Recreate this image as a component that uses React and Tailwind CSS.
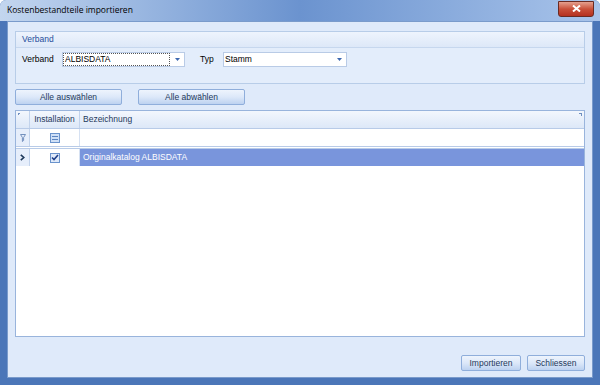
import React from "react";

const Combo = ({ value, width, focused }) => (
  <div className={`flex items-center h-[15px] bg-white border border-[#b9cbe6] ${width}`}>
    <div className={`flex-1 h-full flex items-center px-[1px] ${focused ? "border border-dotted border-[#555]" : ""}`}>
      <span className="leading-none">{value}</span>
    </div>
    <div className="w-[14px] h-full flex items-center justify-center">
      <svg width="5" height="3" viewBox="0 0 5 3">
        <path d="M0 0h5L2.5 3z" fill="#3d68b0" />
      </svg>
    </div>
  </div>
);

const Btn = ({ children, width }) => (
  <button className={`h-[16px] ${width} rounded-[2px] border border-[#8faedb] bg-gradient-to-b from-[#eef4fd] via-[#dce8f9] to-[#bdd2f0] text-[8.5px] leading-none text-[#1e395b]`}>
    {children}
  </button>
);

const App = () => {
  return (
    <div
      className="w-[600px] h-[385px] flex flex-col bg-[#4b76b8] rounded-t-[6px] overflow-hidden text-[8.5px] text-black"
      style={{ fontFamily: "'Liberation Sans', Arial, sans-serif" }}
    >
      {/* title bar */}
      <div className="h-[21px] flex items-center bg-gradient-to-r from-[#c3d6ef] via-[#6b93cf] to-[#a9c4ea]">
        <span
          className="ml-[7px] text-[8.5px] text-black"
          style={{ fontFamily: "'Open Sans', 'Liberation Sans', sans-serif" }}
        >
          Kostenbestandteile importieren
        </span>
        <div className="ml-auto mr-[6px] mt-[-4px] w-[36px] h-[16px] rounded-b-[3px] border border-[#6b2a22] bg-gradient-to-b from-[#e4a08f] via-[#c9503a] to-[#b5301f] flex items-center justify-center">
          <svg width="9" height="7" viewBox="0 0 9 7">
            <path d="M1 0.5l7 6M8 0.5l-7 6" stroke="#fff" strokeWidth="2" />
          </svg>
        </div>
      </div>

      {/* client area */}
      <div className="flex-1 mx-[7px] mb-[7px] border border-[#7a9bcb] bg-[#dfeafa] flex flex-col px-[7px] pt-[9px] pb-[6px]">
        {/* group box */}
        <div className="h-[53px] border border-[#b8cde8] bg-[#e3edfb] flex flex-col">
          <div className="h-[16px] bg-gradient-to-b from-[#eef4fd] to-[#dde8f8] border-b border-[#c6d7ee] flex items-center pl-[6px] text-[#1f4d9a]">
            Verband
          </div>
          <div className="flex items-center mt-[4px] pl-[6px]">
            <span className="w-[40px]">Verband</span>
            <Combo value="ALBISDATA" width="w-[123px]" focused />
            <span className="ml-[15px] w-[23px]">Typ</span>
            <Combo value="Stamm" width="w-[124px]" />
          </div>
        </div>

        {/* buttons */}
        <div className="flex gap-[16px] mt-[5px]">
          <Btn width="w-[107px]">Alle auswählen</Btn>
          <Btn width="w-[107px]">Alle abwählen</Btn>
        </div>

        {/* grid */}
        <div className="mt-[5px] h-[227px] border border-[#99b4dc] bg-white flex flex-col">
          <div className="h-[18px] flex bg-gradient-to-b from-[#f3f7fd] to-[#dde8f8] border-b border-[#b8cbe8]">
            <div className="w-[14px] border-r border-[#c2d3ec] relative">
              <div className="absolute left-[2px] top-[2px] w-[2px] h-[2px] border-l border-t border-[#6f8fbf]" />
            </div>
            <div className="w-[50px] border-r border-[#c2d3ec] flex items-center justify-center text-[#1e395b]">Installation</div>
            <div className="flex-1 flex items-center pl-[3px] text-[#1e395b] relative">
              Bezeichnung
              <div className="absolute right-[2px] top-[2px] w-[3px] h-[3px] border-r border-t border-[#6f8fbf]" />
            </div>
          </div>
          <div className="h-[18px] flex border-b border-[#b8cbe8]">
            <div className="w-[14px] border-r border-[#c2d3ec] bg-[#e6eefb] flex items-center justify-center">
              <svg width="6" height="8" viewBox="0 0 6 8">
                <path d="M0.5 0.5h5L3.6 3.5v3l-1.2 1v-4z" fill="none" stroke="#7390bd" strokeWidth="1" />
              </svg>
            </div>
            <div className="w-[50px] border-r border-[#d6e1f2] flex items-center justify-center">
              <div className="w-[10px] h-[10px] border border-[#6a93cc] bg-[#cfe0f7] flex items-center justify-center">
                <div className="w-[6px] h-[4px] border-t border-b border-[#5b84c0]" />
              </div>
            </div>
            <div className="flex-1" />
          </div>
          <div className="h-[18px] flex border-t border-[#b8cbe8] mt-[1px]">
            <div className="w-[14px] border-r border-[#c2d3ec] bg-[#e6eefb] flex items-center justify-center">
              <svg width="5" height="7" viewBox="0 0 5 7">
                <path d="M0.8 0.8l3 2.7-3 2.7" fill="none" stroke="#1e395b" strokeWidth="1.6" />
              </svg>
            </div>
            <div className="w-[50px] border-r border-[#d6e1f2] flex items-center justify-center">
              <div className="w-[10px] h-[10px] border border-[#6a93cc] bg-[#dfeafa] flex items-center justify-center">
                <svg width="8" height="7" viewBox="0 0 8 7">
                  <path d="M1 3.5l2 2 4-4.5" fill="none" stroke="#1e3f8a" strokeWidth="1.6" />
                </svg>
              </div>
            </div>
            <div className="flex-1 bg-[#7995dc] text-white flex items-center pl-[3px]">Originalkatalog ALBISDATA</div>
          </div>
          <div className="flex-1" />
        </div>

        {/* bottom buttons */}
        <div className="mt-auto flex justify-end gap-[6px]">
          <Btn width="w-[60px]">Importieren</Btn>
          <Btn width="w-[58px]">Schliessen</Btn>
        </div>
      </div>
    </div>
  );
};

export default App;
